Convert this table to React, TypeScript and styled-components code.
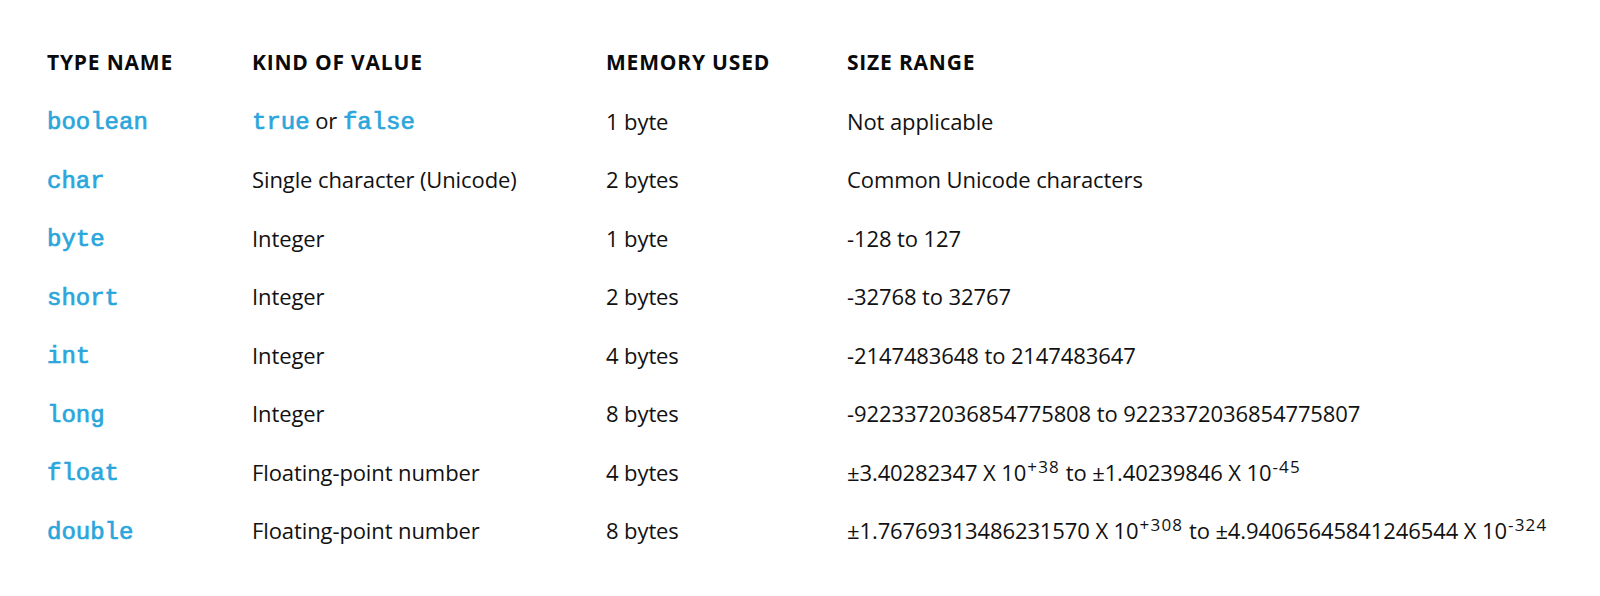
import { FC, Fragment, ReactNode } from 'react';
import styled, { createGlobalStyle } from 'styled-components';

const GlobalStyle = createGlobalStyle`
  body {
    margin: 0;
    background: #ffffff;
    font-family: 'Open Sans', 'Liberation Sans', sans-serif;
    color: #111111;
  }
`;

interface IRow {
  type: string;
  kind: ReactNode;
  memory: string;
  range: ReactNode;
}

const Page = styled.div`
  width: 1600px;
  height: 596px;
  box-sizing: border-box;
  padding: 33px 0 0 47px;
`;

const Table = styled.div`
  display: grid;
  grid-template-columns: 205px 354px 241px auto;
  grid-auto-rows: 58.5px;
  align-items: center;
`;

const HeadCell = styled.div`
  font-family: 'Open Sans', 'Liberation Sans', sans-serif;
  font-weight: 700;
  font-size: 21px;
  letter-spacing: 0.8px;
  color: #0a0a0a;
  white-space: nowrap;
`;

const Cell = styled.div`
  font-size: 22px;
  letter-spacing: -0.1px;
  color: #111111;
  white-space: nowrap;
`;

const Code = styled.span`
  font-family: 'Liberation Mono', 'Courier New', monospace;
  font-weight: 400;
  font-size: 24px;
  letter-spacing: 0;
  color: #2aa6dc;
  -webkit-text-stroke: 0.7px #2aa6dc;
`;

const Sup = styled.sup`
  font-size: 17px;
  letter-spacing: 1.2px;
  margin-left: 1px;
  vertical-align: 8px;
  line-height: 0;
`;

const rows: IRow[] = [
  {
    type: 'boolean',
    kind: (
      <>
        <Code>true</Code> or <Code>false</Code>
      </>
    ),
    memory: '1 byte',
    range: 'Not applicable',
  },
  { type: 'char', kind: 'Single character (Unicode)', memory: '2 bytes', range: 'Common Unicode characters' },
  { type: 'byte', kind: 'Integer', memory: '1 byte', range: '-128 to 127' },
  { type: 'short', kind: 'Integer', memory: '2 bytes', range: '-32768 to 32767' },
  { type: 'int', kind: 'Integer', memory: '4 bytes', range: '-2147483648 to 2147483647' },
  { type: 'long', kind: 'Integer', memory: '8 bytes', range: '-9223372036854775808 to 9223372036854775807' },
  {
    type: 'float',
    kind: 'Floating-point number',
    memory: '4 bytes',
    range: (
      <>
        ±3.40282347 X 10<Sup>+38</Sup> to ±1.40239846 X 10<Sup>-45</Sup>
      </>
    ),
  },
  {
    type: 'double',
    kind: 'Floating-point number',
    memory: '8 bytes',
    range: (
      <>
        ±1.76769313486231570 X 10<Sup>+308</Sup> to ±4.94065645841246544 X 10<Sup>-324</Sup>
      </>
    ),
  },
];

const App: FC = () => (
  <>
    <GlobalStyle />
    <Page>
      <Table>
        <HeadCell>TYPE NAME</HeadCell>
        <HeadCell>KIND OF VALUE</HeadCell>
        <HeadCell>MEMORY USED</HeadCell>
        <HeadCell>SIZE RANGE</HeadCell>
        {rows.map((row) => (
          <Fragment key={row.type}>
            <Cell>
              <Code>{row.type}</Code>
            </Cell>
            <Cell>{row.kind}</Cell>
            <Cell>{row.memory}</Cell>
            <Cell>{row.range}</Cell>
          </Fragment>
        ))}
      </Table>
    </Page>
  </>
);

export default App;
